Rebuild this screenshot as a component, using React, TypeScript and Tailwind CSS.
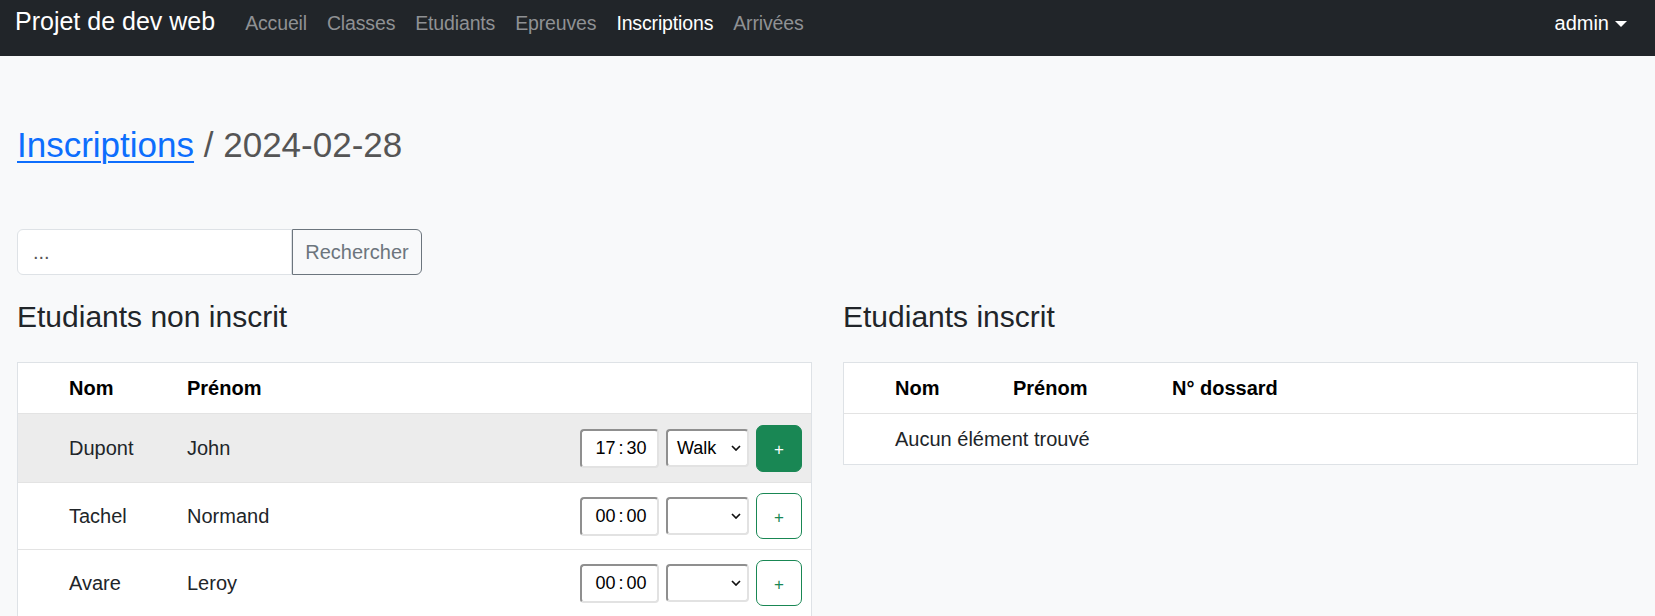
const navLinks = [
  { label: "Accueil", active: false },
  { label: "Classes", active: false },
  { label: "Etudiants", active: false },
  { label: "Epreuves", active: false },
  { label: "Inscriptions", active: true },
  { label: "Arrivées", active: false },
];

const nonInscrits = [
  { nom: "Dupont", prenom: "John", time: ["17", "30"], sport: "Walk", selected: true },
  { nom: "Tachel", prenom: "Normand", time: ["00", "00"], sport: "", selected: false },
  { nom: "Avare", prenom: "Leroy", time: ["00", "00"], sport: "", selected: false },
];

function Chevron() {
  return (
    <svg width="10" height="6" viewBox="0 0 10 6" fill="none">
      <path d="M1 1 L5 5 L9 1" stroke="#111" strokeWidth="1.7" />
    </svg>
  );
}

export default function App() {
  return (
    <div className="min-h-screen bg-[#f8f9fa] font-['Liberation_Sans',Arial,sans-serif] text-[20px] text-[#212529]">
      {/* Navbar */}
      <nav className="flex h-[56px] items-baseline bg-[#212529] px-[15px]">
        <a className="mr-[20px] pt-[3px] text-[25px] leading-[37.5px] text-white">Projet de dev web</a>
        <ul className="flex items-baseline">
          {navLinks.map((link) => (
            <li key={link.label}>
              <a
                className={
                  link.active
                    ? "px-[10px] text-[19.5px] leading-[30px] tracking-[-0.15px] text-white"
                    : "px-[10px] text-[19.5px] leading-[30px] tracking-[-0.15px] text-[#8f9194]"
                }
              >
                {link.label}
              </a>
            </li>
          ))}
        </ul>
        <a className="ml-auto flex items-center pl-[10px] pr-[13px] leading-[30px] text-white">
          admin
          <span className="ml-[6px] mt-[2px] inline-block h-0 w-0 border-x-[6px] border-t-[6px] border-x-transparent border-t-white" />
        </a>
      </nav>

      <main className="px-[17px] pt-[68px]">
        {/* Title */}
        <h3 className="text-[35px] leading-[42px] text-[#555]">
          <a className="text-[#0d6efd] underline decoration-[1.5px] underline-offset-[4px]">Inscriptions</a> / 2024-02-28
        </h3>

        {/* Search */}
        <form className="mt-[63px] flex h-[46px]">
          <div className="flex w-[275px] items-center rounded-l-[6px] border border-[#dee2e6] bg-white px-[15px] text-[#555]">
            ...
          </div>
          <button
            type="button"
            className="w-[130px] rounded-r-[6px] border border-[#6c757d] text-[#6c757d]"
          >
            Rechercher
          </button>
        </form>

        <div className="mt-[24px] grid grid-cols-2 gap-[31px]">
          {/* Non inscrits */}
          <div>
            <h4 className="text-[30px] leading-[36px]">Etudiants non inscrit</h4>
            <div className="mt-[27px] border border-[#dee2e6] bg-white">
              <div className="flex h-[51px] items-center border-b border-[#e3e3e3] font-bold text-black">
                <div className="w-[51px]" />
                <div className="w-[118px]">Nom</div>
                <div>Prénom</div>
              </div>
              {nonInscrits.map((e, i) => (
                <div
                  key={e.nom}
                  className={
                    i === 0
                      ? "flex h-[69px] items-center border-b border-[#e3e3e3] bg-[#ececec]"
                      : "flex h-[67px] items-center border-b border-[#e3e3e3]"
                  }
                >
                  <div className="w-[51px]" />
                  <div className="w-[118px]">{e.nom}</div>
                  <div>{e.prenom}</div>
                  <div className="ml-auto flex items-center gap-[7px] pr-[9px]">
                    <div className="flex h-[39px] w-[79px] items-center justify-center rounded-[4px] border-2 border-t-[#8f8f8f] border-l-[#8f8f8f] border-r-[#e2e2e2] border-b-[#e2e2e2] bg-white pl-[3px] text-[18px] text-black">
                      {e.time[0]}
                      <span className="mx-[3px]">:</span>
                      {e.time[1]}
                    </div>
                    <div className="flex h-[38px] w-[83px] items-center justify-between rounded-[4px] border-2 border-t-[#8f8f8f] border-l-[#8f8f8f] border-r-[#e2e2e2] border-b-[#e2e2e2] bg-white pl-[9px] pr-[6px] text-[18px] text-black">
                      <span>{e.sport}</span>
                      <Chevron />
                    </div>
                    <button
                      type="button"
                      className={
                        e.selected
                          ? "flex h-[47px] w-[46px] items-center justify-center rounded-[7px] border border-[#198754] bg-[#198754] pt-[3px] text-[17px] text-white"
                          : "flex h-[46px] w-[46px] items-center justify-center rounded-[7px] border border-[#198754] bg-white pt-[3px] text-[17px] text-[#198754]"
                      }
                    >
                      +
                    </button>
                  </div>
                </div>
              ))}
            </div>
          </div>

          {/* Inscrits */}
          <div>
            <h4 className="text-[30px] leading-[36px]">Etudiants inscrit</h4>
            <div className="mt-[27px] border border-[#dee2e6] bg-white">
              <div className="flex h-[51px] items-center border-b border-[#e3e3e3] font-bold text-black">
                <div className="w-[51px]" />
                <div className="w-[118px]">Nom</div>
                <div className="w-[159px]">Prénom</div>
                <div>N° dossard</div>
              </div>
              <div className="flex h-[50px] items-center">
                <div className="w-[51px]" />
                <div>Aucun élément trouvé</div>
              </div>
            </div>
          </div>
        </div>
      </main>
    </div>
  );
}
